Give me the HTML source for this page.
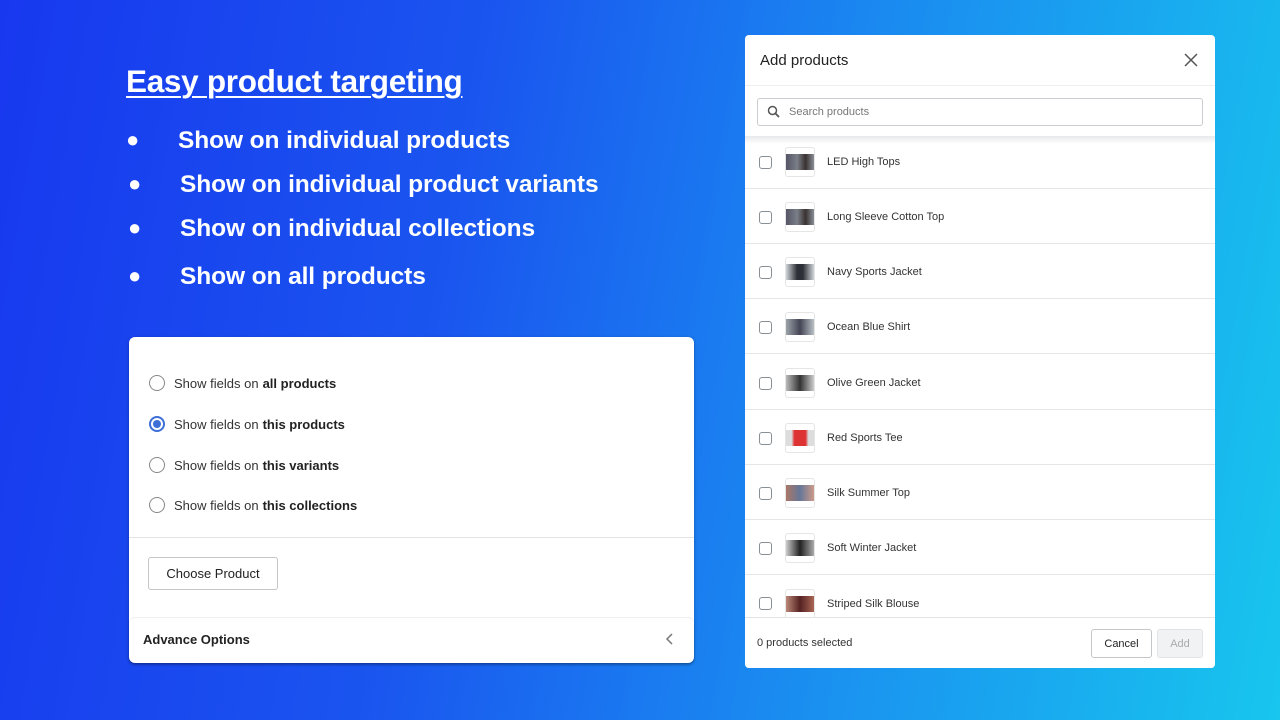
<!DOCTYPE html>
<html><head><meta charset="utf-8"><style>
*{margin:0;padding:0;box-sizing:border-box}
body{width:1280px;height:720px;overflow:hidden;position:relative;font-family:"Liberation Sans",sans-serif;background:linear-gradient(100deg,#1838ef 0%,#1a55ef 35%,#1a8df0 65%,#18c6ee 100%)}
.h{position:absolute;left:126px;top:63px;color:#fff;font-weight:bold;font-size:31.5px;text-decoration:underline;text-decoration-thickness:2px;text-underline-offset:4px;letter-spacing:-0.3px}
.b{position:absolute;color:#fff;font-weight:bold;font-size:24.5px;letter-spacing:-0.1px}
.b span{position:absolute;left:-52px;font-size:22px}
.card{position:absolute;left:129px;top:337px;width:565px;height:326px;background:#fff;border-radius:6px;box-shadow:0 1px 3px rgba(0,0,0,.3)}
.r{position:absolute;left:20px;font-size:13px;color:#333;display:flex;align-items:center}
.r i{width:16px;height:16px;border:1.5px solid #888;border-radius:50%;margin-right:9px;display:inline-block;position:relative}
.r i.on{border:2px solid #3d6fd6}
.r i.on:after{content:"";position:absolute;left:2px;top:2px;width:8px;height:8px;border-radius:50%;background:#3d6fd6}
.r b{color:#222;margin-left:4px}
.dlg{position:absolute;left:745px;top:35px;width:470px;height:633px;background:#fff;border-radius:4px;overflow:hidden}
.row{position:absolute;left:0;width:470px;height:55px;border-bottom:1.5px solid #e4e6e8;display:flex;align-items:center;font-size:11px;color:#333;padding-top:2px}
.cb{width:13px;height:13px;border:1.5px solid #8a8f94;border-radius:3px;margin-left:14px}
.th{width:30px;height:30px;margin-left:13px;margin-right:12px;border:1px solid #e5e5e5;border-radius:3px;display:flex;align-items:center;justify-content:center}
.th div{width:28px;height:16px;background:linear-gradient(90deg,#556 0%,#7a7f88 40%,#3a3230 70%,#8a8f98 100%)}
</style></head><body>
<div class="h">Easy product targeting</div>
<div class="b" style="left:178px;top:127px"><span>●</span>Show on individual products</div>
<div class="b" style="left:180px;top:171px"><span>●</span>Show on individual product variants</div>
<div class="b" style="left:180px;top:215px"><span>●</span>Show on individual collections</div>
<div class="b" style="left:180px;top:263px"><span>●</span>Show on all products</div>

<div class="card">
<div class="r" style="top:38px"><i></i>Show fields on<b>all products</b></div>
<div class="r" style="top:79px"><i class="on"></i>Show fields on<b>this products</b></div>
<div class="r" style="top:120px"><i></i>Show fields on<b>this variants</b></div>
<div class="r" style="top:160px"><i></i>Show fields on<b>this collections</b></div>
<div style="position:absolute;left:0;right:0;top:200px;border-top:1px solid #e3e3e3"></div>
<div style="position:absolute;left:19px;top:220px;width:130px;height:33px;border:1px solid #c5c5c5;border-radius:3px;font-size:13px;color:#222;display:flex;align-items:center;justify-content:center">Choose Product</div>
<div style="position:absolute;left:0;right:0;top:280px;height:46px;border-top:1px solid #eee;border-radius:6px;box-shadow:0 2px 2px rgba(0,0,0,.15)"></div>
<div style="position:absolute;left:14px;top:295px;font-size:13px;font-weight:bold;color:#222">Advance Options</div>
<svg style="position:absolute;left:536px;top:295px" width="10" height="14"><path d="M7 2 L2 7 L7 12" stroke="#777" stroke-width="1.5" fill="none"/></svg>
</div>

<div class="dlg">
<div style="position:absolute;left:15px;top:17px;font-size:15px;color:#222">Add products</div>
<svg style="position:absolute;left:439px;top:18px" width="14" height="14"><path d="M1 1L13 13M13 1L1 13" stroke="#555" stroke-width="1.5"/></svg>
<div style="position:absolute;left:0;right:0;top:50px;border-top:1px solid #eceef0"></div>
<div style="position:absolute;left:12px;top:63px;width:446px;height:28px;border:1px solid #c9ccd0;border-radius:3px;font-size:11px;color:#777;padding:7px 0 0 31px">Search products</div>
<svg style="position:absolute;left:22px;top:70px" width="14" height="14"><circle cx="5.5" cy="5.5" r="4" stroke="#555" stroke-width="1.5" fill="none"/><path d="M8.5 8.5L12 12" stroke="#555" stroke-width="1.8"/></svg>
<div class="row" style="top:99px"><div class="cb"></div><div class="th"><div></div></div>LED High Tops</div>
<div style="position:absolute;left:0;right:0;top:101px;height:8px;background:linear-gradient(#e8e9eb,rgba(255,255,255,0))"></div>
<div class="row" style="top:154px"><div class="cb"></div><div class="th"><div></div></div>Long Sleeve Cotton Top</div>
<div class="row" style="top:209px"><div class="cb"></div><div class="th"><div style="background:linear-gradient(90deg,#cfd4d8,#2c3036 40%,#2c3036 60%,#cfd4d8)"></div></div>Navy Sports Jacket</div>
<div class="row" style="top:264px"><div class="cb"></div><div class="th"><div style="background:linear-gradient(90deg,#9ca4a8,#445,#b8c0c4)"></div></div>Ocean Blue Shirt</div>
<div class="row" style="top:320px"><div class="cb"></div><div class="th"><div style="background:linear-gradient(90deg,#bbb,#333 50%,#ccc)"></div></div>Olive Green Jacket</div>
<div class="row" style="top:375px"><div class="cb"></div><div class="th"><div style="background:linear-gradient(90deg,#ddd 20%,#d33 30%,#d33 70%,#ddd 80%)"></div></div>Red Sports Tee</div>
<div class="row" style="top:430px"><div class="cb"></div><div class="th"><div style="background:linear-gradient(90deg,#a76,#679,#c98)"></div></div>Silk Summer Top</div>
<div class="row" style="top:485px"><div class="cb"></div><div class="th"><div style="background:linear-gradient(90deg,#ccc,#222 50%,#aaa)"></div></div>Soft Winter Jacket</div>
<div class="row" style="top:540px;border:none"><div class="cb"></div><div class="th"><div style="background:linear-gradient(90deg,#b87,#522,#a65)"></div></div>Striped Silk Blouse</div>
<div style="position:absolute;left:0;right:0;top:582px;height:51px;background:#fff;border-top:1px solid #e1e3e5"></div>
<div style="position:absolute;left:12px;top:602px;font-size:11px;color:#333">0 products selected</div>
<div style="position:absolute;left:346px;top:594px;width:61px;height:29px;border:1px solid #c4c7ca;border-radius:3px;font-size:11px;color:#222;display:flex;align-items:center;justify-content:center">Cancel</div>
<div style="position:absolute;left:412px;top:594px;width:46px;height:29px;background:#f1f2f3;border:1px solid #e2e3e5;border-radius:3px;font-size:11px;color:#aaa;display:flex;align-items:center;justify-content:center">Add</div>
</div>
</body></html>
